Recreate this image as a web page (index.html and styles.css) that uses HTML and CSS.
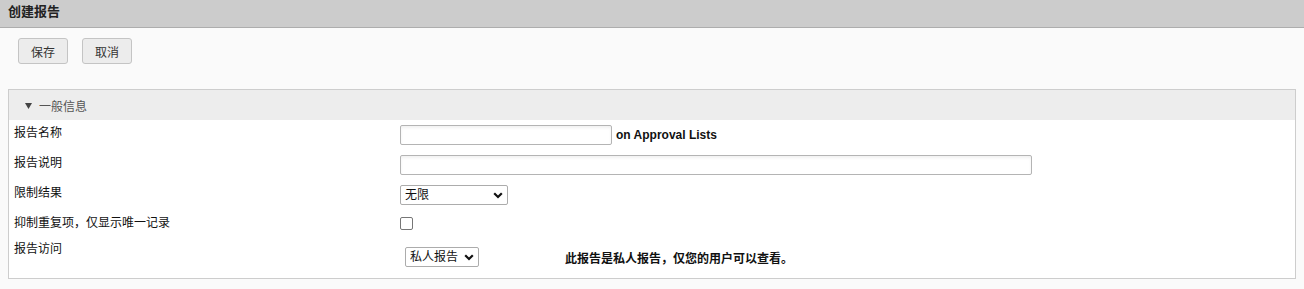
FILE: index.html
```html
<!DOCTYPE html>
<html lang="zh">
<head>
<meta charset="utf-8">
<title>创建报告</title>
<link rel="stylesheet" href="styles.css">
</head>
<body>
<div class="topbar"><h1 class="title">创建报告</h1></div>
<div class="content">
  <div class="actions">
    <button class="btn" type="button">保存</button>
    <button class="btn" type="button">取消</button>
  </div>
  <section class="panel">
    <div class="panel-head">
      <svg class="tri" width="7" height="6" viewBox="0 0 7 6"><path d="M0 0H7L3.5 6Z" fill="#444"/></svg>
      <span>一般信息</span>
    </div>
    <div class="panel-body">
      <div class="row">
        <div class="label">报告名称</div>
        <div class="value">
          <input class="text short" type="text">
          <span class="bold on">on Approval Lists</span>
        </div>
      </div>
      <div class="row">
        <div class="label">报告说明</div>
        <div class="value"><input class="text long" type="text"></div>
      </div>
      <div class="row">
        <div class="label">限制结果</div>
        <div class="value">
          <span class="sel-wrap">
            <select class="sel limit"><option>无限</option></select>
            <svg class="chev" width="10" height="7" viewBox="0 0 10 7"><path d="M1.2 1.2L5 5L8.8 1.2" fill="none" stroke="#111" stroke-width="2.2"/></svg>
          </span>
        </div>
      </div>
      <div class="row">
        <div class="label">抑制重复项，仅显示唯一记录</div>
        <div class="value"><input class="check" type="checkbox"></div>
      </div>
      <div class="row last">
        <div class="label">报告访问</div>
        <div class="value access">
          <span class="sel-wrap">
            <select class="sel private"><option>私人报告</option></select>
            <svg class="chev" width="10" height="7" viewBox="0 0 10 7"><path d="M1.2 1.2L5 5L8.8 1.2" fill="none" stroke="#111" stroke-width="2.2"/></svg>
          </span>
          <span class="bold note">此报告是私人报告，仅您的用户可以查看。</span>
        </div>
      </div>
    </div>
  </section>
</div>
</body>
</html>
```
FILE: styles.css
```css
* { box-sizing: border-box; }
html, body { margin: 0; padding: 0; }
body {
  background: #fafafa;
  font-family: "Liberation Sans", Arial, "Noto Sans CJK SC", sans-serif;
  font-size: 12px;
  color: #111;
  height: 289px;
  overflow: hidden;
}
.topbar {
  height: 28px;
  background: #cccccc;
  border-bottom: 1px solid #adadad;
  padding: 2px 8px 0;
}
.title {
  margin: 0;
  font-size: 13px;
  line-height: 19px;
  font-weight: bold;
  color: #222;
}
.content { padding: 0 8px; }
.actions {
  display: flex;
  gap: 14px;
  padding: 10px 0 0 10px;
}
.btn {
  width: 50px;
  height: 26px;
  padding: 0;
  background: #ececec;
  border: 1px solid #c4c4c4;
  border-radius: 3px;
  font-family: "Liberation Sans", "Noto Sans CJK SC", sans-serif;
  font-size: 12px;
  color: #333;
}
.panel {
  margin-top: 25px;
  border: 1px solid #cdcdcd;
  background: #fff;
}
.panel-head {
  height: 30px;
  background: #ededed;
  display: flex;
  align-items: center;
  gap: 7px;
  padding: 0 0 0 16px;
  color: #555;
  font-size: 12px;
}
.tri { margin-top: 1px; }
.panel-body { padding: 0 5px 6px; }
.row {
  display: flex;
  align-items: flex-start;
  padding: 5px 0;
}
.label {
  width: 386px;
  flex: none;
  line-height: 16px;
  color: #111;
}
.value {
  display: flex;
  align-items: center;
  min-height: 16px;
}
.text {
  height: 20px;
  border: 1px solid #b4b4b4;
  border-radius: 2px;
  background: #fff;
  box-shadow: inset 0 2px 3px rgba(0,0,0,0.06);
  margin: 0;
  padding: 0 3px;
  font: 12px "Liberation Sans", "Noto Sans CJK SC", sans-serif;
}
.short { width: 212px; }
.long { width: 632px; }
.bold { font-weight: bold; color: #111; }
.on { margin-left: 4px; font-size: 12px; }
.sel-wrap { position: relative; display: inline-flex; }
.sel {
  appearance: none;
  -webkit-appearance: none;
  height: 20px;
  margin: 0;
  border: 1px solid #acacac;
  border-radius: 2px;
  background: #fff;
  color: #111;
  font: 12px "Liberation Sans", "Noto Sans CJK SC", sans-serif;
  padding: 0 0 0 4px;
}
.limit { width: 108px; }
.private { width: 74px; }
.chev {
  position: absolute;
  right: 5px;
  top: 7px;
  pointer-events: none;
}
.check {
  width: 13px;
  height: 13px;
  margin: 0;
  appearance: none;
  -webkit-appearance: none;
  border: 1px solid #767676;
  border-radius: 2px;
  background: #fff;
}
.access { padding: 6px 0 0 5px; }
.note { margin-left: 86px; }
```
